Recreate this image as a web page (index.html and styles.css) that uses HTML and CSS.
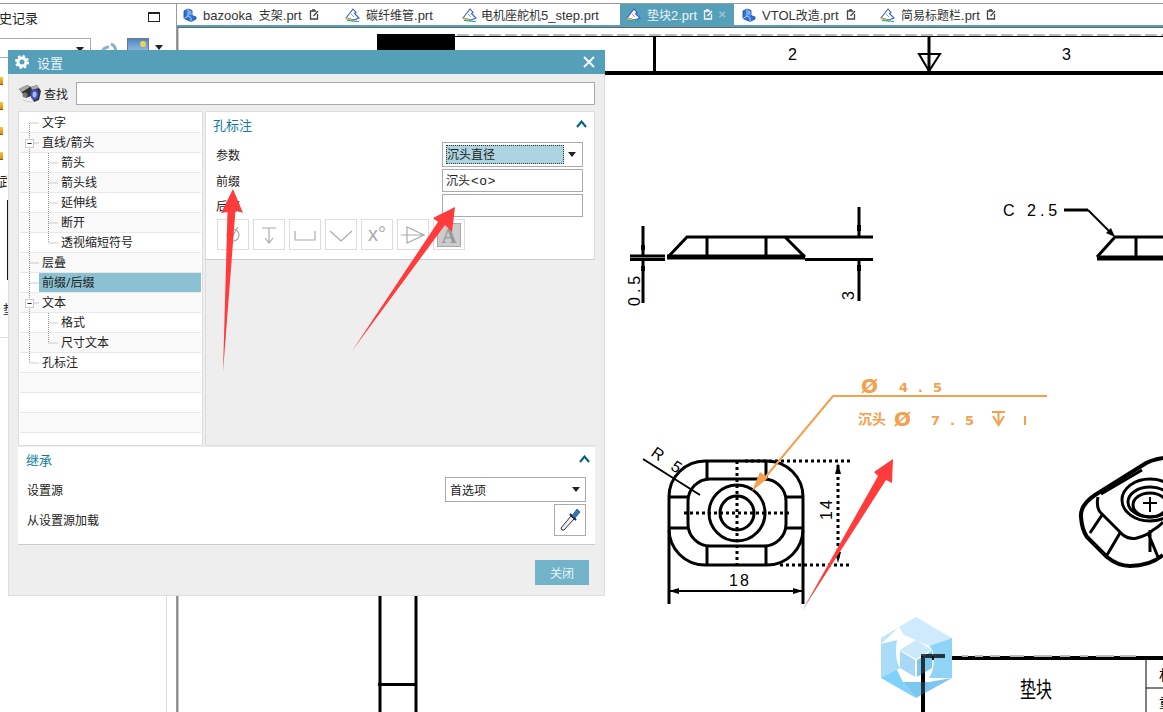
FILE: index.html
```html
<!DOCTYPE html>
<html lang="zh">
<head>
<meta charset="utf-8">
<title>设置</title>
<link rel="stylesheet" href="styles.css">
</head>
<body>
<svg class="defs" width="0" height="0" aria-hidden="true">
  <symbol id="ic-part" viewBox="0 0 14 14">
    <path d="M1 3 5 1l4 1.500v5l4 1.500v2l-5 2.500L1 10.500Z" fill="#2f72d6" stroke="#17459b" stroke-width=".8"/>
    <path d="M5 1v7l3 1.500v4M5 8l-4 2.500" fill="none" stroke="#bcd6fa" stroke-width=".9"/>
    <path d="M5.500 2.200 8.500 3v4.500l-3-1Z" fill="#7fb0f2"/>
  </symbol>
  <symbol id="ic-sheet" viewBox="0 0 16 14">
    <path d="M1 10 8 1l3 3.500-1.500 1 4.500 4.500-5 2Z" fill="#fff" stroke="#3b55d8" stroke-width="1.100"/>
    <path d="M1 10.500 9 13" stroke="#e5c52c" stroke-width="1.800" fill="none"/>
    <path d="M2 12.300 14 13.500" stroke="#27a7a0" stroke-width="1.200" fill="none"/>
    <path d="M6 6 9 9" stroke="#8b9bea" stroke-width="1" fill="none"/>
  </symbol>
  <symbol id="ic-doc" viewBox="0 0 10 11">
    <path d="M7 2H1.500v8h7V5" fill="none" stroke="currentColor" stroke-width="1.300"/>
    <path d="M3 1h3M4.500 7 9 2" fill="none" stroke="currentColor" stroke-width="1.300"/>
  </symbol>
  <symbol id="ic-chev" viewBox="0 0 11 8">
    <path d="M1 7 5.500 1.500 10 7" fill="none" stroke="#005f85" stroke-width="2"/>
  </symbol>
  <symbol id="ic-caret" viewBox="0 0 8 5">
    <path d="M0 0h8L4 5Z" fill="#222"/>
  </symbol>
</svg>

<div class="app">
  <aside class="side">
    <div class="side-head">
      <span class="side-title">史记录</span>
      <span class="win-icon"></span>
    </div>
    <div class="side-tools">
      <div class="side-combo"><svg class="caret" width="8" height="5"><use href="#ic-caret"/></svg></div>
      <svg class="tool-sync" width="18" height="12" viewBox="0 0 18 12"><path d="M2 11C3 6 6 5 9 5M16 11c0-5-2-8-5-9" fill="none" stroke="#8fb2bf" stroke-width="3"/></svg>
      <div class="tool-pic"><span class="tool-sun"></span></div>
      <svg class="caret tool-caret" width="8" height="5"><use href="#ic-caret"/></svg>
    </div>
    <div class="side-marks">
      <span class="mark"></span><span class="mark"></span><span class="mark"></span><span class="mark"></span>
    </div>
    <div class="side-frag">武</div>
    <div class="side-bar"></div>
    <div class="side-frag side-frag-b">垫</div>
    <div class="side-lower"></div>
  </aside>

  <main class="main">
    <nav class="tabs">
      <div class="tab t1"><svg class="tab-ic" width="14" height="14"><use href="#ic-part"/></svg><span class="t1-text">bazooka <span class="cn">支架</span>.prt</span><svg class="tab-doc" width="10" height="11"><use href="#ic-doc"/></svg></div>
      <div class="tab t2"><svg class="tab-ic" width="16" height="14"><use href="#ic-sheet"/></svg><span><span class="cn">碳纤维管</span>.prt</span></div>
      <div class="tab t3"><svg class="tab-ic" width="16" height="14"><use href="#ic-sheet"/></svg><span><span class="cn">电机座舵机</span>5_step.prt</span></div>
      <div class="tab t4 active"><svg class="tab-ic" width="16" height="14"><use href="#ic-sheet"/></svg><span><span class="cn">垫块</span>2.prt</span><svg class="tab-doc" width="10" height="11"><use href="#ic-doc"/></svg><span class="tab-x">✕</span></div>
      <div class="tab t5"><svg class="tab-ic" width="14" height="14"><use href="#ic-part"/></svg><span>VTOL<span class="cn">改造</span>.prt</span><svg class="tab-doc" width="10" height="11"><use href="#ic-doc"/></svg></div>
      <div class="tab t6"><svg class="tab-ic" width="16" height="14"><use href="#ic-sheet"/></svg><span><span class="cn">简易标题栏</span>.prt</span><svg class="tab-doc" width="10" height="11"><use href="#ic-doc"/></svg></div>
    </nav>
    <div class="canvas">
      <svg class="sheet" width="985" height="684" viewBox="178 28 985 684">
        <g class="frame">
          <path class="dash" d="M377 35H1163"/>
          <path class="w1" d="M378 36.500H1163"/>
          <rect x="377" y="34" width="78" height="17" fill="#000" stroke="none"/>
          <path class="w4" d="M378 73H1163"/>
          <path class="w3" d="M654.500 36V73M929 36V71"/>
          <path class="w2" d="M919 54H940L929 71Z"/>
          <path class="w3" d="M380 596V712M416 596V712M378 684.500H417"/>
          <path class="w4" d="M923 712V658H1163"/>
          <path class="w1" d="M1146 658V712M1146 688H1163"/>
        </g>
        <text class="num" x="788" y="60">2</text>
        <text class="num" x="1062" y="60">3</text>
        <text class="title-cn" transform="translate(1020 697) scale(1 1.35)">垫块</text>
        <text class="title-cn small" x="1159" y="680">材</text>
        <text class="title-cn small" x="1159" y="708">重</text>
        <path class="ghost" d="M962 656h6M975 656h8M990 656h10M1010 656h14M1034 656h18M1060 656h10M1080 656h8M1096 656h18M1120 656h16"/>

        <g>
          <path class="w5" d="M667 257H805"/>
          <path class="w3" d="M668 257 687 237H785L805 257M707 237V257M766 237V257M785 237H873M805 259.500H873"/>
          <path class="w3" d="M859 207V236M859 260V301M643 226V255M643 261V303M630 256H665M630 259.500H665"/>
          <path d="M641 245h4v5h-4ZM641 266h4v5h-4ZM857 225h4v6h-4ZM857 265h4v6h-4Z" fill="#000" stroke="none"/>
          <text class="dim big" transform="translate(854 300) rotate(-90)">3</text>
          <text class="dim big" transform="translate(640 306) rotate(-90)" letter-spacing="4">0.5</text>
        </g>

        <g>
          <text class="dim big" x="1003" y="216" letter-spacing="4">C 2.5</text>
          <path class="w3" d="M1064 210H1088"/>
          <path class="w2" d="M1088 210 1112 234"/>
          <path d="M1115 237 1106 233 1111 228Z" fill="#000" stroke="none"/>
          <path class="w5" d="M1097 258H1163"/>
          <path class="w3" d="M1097 257 1115 237H1163M1136 237V257"/>
        </g>

        <g>
          <rect class="w3" x="669" y="461" width="134" height="104" rx="36"/>
          <rect class="w3" x="688" y="479" width="98" height="67" rx="22"/>
          <path class="w3" d="M707 461V479M766 461V479M707 546V565M766 546V565M669 497H688M669 528H688M786 497H803M786 528H803"/>
          <path class="w3" d="M669 530V604M803 530V604"/>
          <circle class="w3" cx="737" cy="513" r="28"/>
          <circle class="w3" cx="737" cy="513" r="17"/>
          <path class="dash3" d="M684 513H790M737 461V565M745 461H850M780 565H850M838 465V560"/>
          <path class="w2" d="M669 591H803M643 459 700 495"/>
          <path d="M669 591 679 588V594ZM803 591 793 588V594ZM838 463 835 474H841ZM838 563 835 552H841Z" fill="#000" stroke="none"/>
          <text class="dim big" x="729" y="586" letter-spacing="2">18</text>
          <text class="dim big" transform="translate(832 520) rotate(-90)" letter-spacing="2">14</text>
          <text class="dim big" transform="translate(650 455) rotate(35)" letter-spacing="4">R 5</text>
        </g>

        <g class="iso">
          <path class="w4" d="M1163 458Q1150 460 1143 465L1095 495Q1080 505 1081 517 1082 530 1087 537L1107 557Q1118 566 1130 566 1150 566 1163 555"/>
          <path class="w3" d="M1098 497Q1096 506 1100 512L1123 535Q1130 540 1137 538 1148 535 1153 530 1160 526 1163 522M1142 470 1101 494M1102 515 1090 533M1120 533 1107 555M1148 533 1158 557M1150 530V552"/>
          <ellipse class="w3" cx="1150" cy="500" rx="28" ry="21"/>
          <ellipse class="w3" cx="1150" cy="502" rx="22" ry="15"/>
          <ellipse class="w3" cx="1150" cy="505" rx="17" ry="12"/>
          <path class="w2" d="M1150 497V512M1143 503H1157"/>
        </g>

        <g>
          <path class="o2" d="M1047 396H833L763 480"/>
          <path d="M752 491 768 478 760 472Z" fill="#f5a04c" stroke="none"/>
          <text class="otext large" x="861" y="393">Ø</text>
          <text class="otext" x="899" y="392" letter-spacing="10">4.5</text>
          <text class="otext cn" x="858" y="424">沉头</text>
          <text class="otext large" x="894" y="426">Ø</text>
          <text class="otext" x="931" y="425" letter-spacing="10">7.5</text>
          <path class="o2" d="M992 412H1005M998.500 412V425M993 416 998.500 425 1004 416"/>
          <path class="o2" d="M1025 416V425"/>
        </g>

        <g stroke="none">
          <path d="M916 617 952 638 929 646 916 640 904 635 899 627Z" fill="#cfeafc"/>
          <path d="M952 638V678L929 678C936 668 935 650 929 646Z" fill="#8fd3f6"/>
          <path d="M952 678 916 698 903 682 929 682Z" fill="#7cc7ef"/>
          <path d="M916 698 881 678 896 668 903 682Z" fill="#7fd1fa"/>
          <path d="M881 678V644L897 640C895 652 896 662 900 668Z" fill="#a9dcf9"/>
          <path d="M881 638 916 617 899 627 881 644Z" fill="#bfe6fb"/>
          <path d="M916 640 932 650 916 659 900 650Z" fill="#cbe9fb"/>
          <path d="M900 651 915 660V677L900 668Z" fill="#a7d8f7"/>
          <path d="M917 660 932 651V668L917 677Z" fill="#7dc6ee"/>
        </g>
        <path class="w4" d="M923 712V656H945" opacity=".75"/>
      </svg>
    </div>
  </main>

  <section class="dialog">
    <header class="dlg-head">
      <svg class="gear" width="14" height="14" viewBox="0 0 14 14"><circle cx="7" cy="7" r="4" fill="none" stroke="#fff" stroke-width="3"/><circle cx="7" cy="7" r="6" fill="none" stroke="#fff" stroke-width="2" stroke-dasharray="2.400 2.300"/></svg>
      <span class="dlg-title">设置</span>
      <svg class="dlg-close" width="12" height="12" viewBox="0 0 12 12"><path d="M1 1 11 11M11 1 1 11" stroke="#fff" stroke-width="1.800"/></svg>
    </header>
    <div class="dlg-body">
      <div class="search">
        <svg class="binoc" width="22" height="19" viewBox="0 0 22 19">
          <path d="M0 5 8 1l4 2 6-2 4 6-2 9-5 2-3-6-5 2-3-4Z" fill="#333"/>
          <path d="M0 5 8 1l3 2-8 5ZM12 3l6-2 2 3-7 2Z" fill="#aaa"/>
          <ellipse cx="15.500" cy="10.500" rx="4" ry="5.500" fill="#3c50bc"/>
          <ellipse cx="15.500" cy="10.500" rx="2" ry="3" fill="#a9b8ee"/>
          <ellipse cx="6" cy="11" rx="2.500" ry="2.500" fill="#777"/>
          <path d="M4 16 10 18 14 18" stroke="#ccc" fill="none"/>
        </svg>
        <span class="search-label">查找</span>
        <div class="field search-input"></div>
      </div>
      <div class="split">
        <div class="tree">
          <div class="row l1">文字</div>
          <div class="row l1">直线/箭头</div>
          <div class="row l2">箭头</div>
          <div class="row l2">箭头线</div>
          <div class="row l2">延伸线</div>
          <div class="row l2">断开</div>
          <div class="row l2">透视缩短符号</div>
          <div class="row l1">层叠</div>
          <div class="row l1 sel">前缀/后缀</div>
          <div class="row l1">文本</div>
          <div class="row l2">格式</div>
          <div class="row l2">尺寸文本</div>
          <div class="row l1">孔标注</div>
          <div class="row"></div>
          <div class="row"></div>
          <div class="row"></div>
          <svg class="tree-lines" width="60" height="270" viewBox="18 111 60 270">
            <path d="M29.500 122V362M29.500 122H39M29.500 142H39M29.500 262H39M29.500 282H39M29.500 302H39M29.500 362H39M48.500 152V242M48.500 162H58M48.500 182H58M48.500 202H58M48.500 222H58M48.500 242H58M48.500 312V342M48.500 322H58M48.500 342H58"/>
            <rect class="minus" x="25.500" y="138.500" width="8" height="8"/>
            <rect class="minus" x="25.500" y="298.500" width="8" height="8"/>
            <path class="minus-bar" d="M27.500 142.500H31.500M27.500 302.500H31.500"/>
          </svg>
        </div>
        <div class="pane">
          <div class="group">
            <div class="group-head">
              <span class="group-title">孔标注</span>
              <svg class="chev" width="11" height="8"><use href="#ic-chev"/></svg>
            </div>
            <div class="form">
              <label class="lbl">参数</label>
              <div class="field sel-box">
                <span class="sel-value">沉头直径</span>
                <svg class="caret" width="8" height="5"><use href="#ic-caret"/></svg>
              </div>
              <label class="lbl">前缀</label>
              <div class="field txt h23">沉头<span class="txt-tag">&lt;o&gt;</span></div>
              <label class="lbl">后缀</label>
              <div class="field h23"></div>
            </div>
            <div class="symbols">
              <div class="sym"><svg width="24" height="24" viewBox="0 0 24 24"><circle cx="12" cy="12" r="6"/><path d="M7 20 17 4"/></svg></div>
              <div class="sym"><svg width="24" height="24" viewBox="0 0 24 24"><path d="M5 5H19M12 5V20M8 15 12 20 16 15"/></svg></div>
              <div class="sym"><svg width="24" height="24" viewBox="0 0 24 24"><path d="M2 8V17H22V8"/></svg></div>
              <div class="sym"><svg width="24" height="24" viewBox="0 0 24 24"><path d="M1 8 12 18 23 8"/></svg></div>
              <div class="sym sym-x">x°</div>
              <div class="sym"><svg width="24" height="24" viewBox="0 0 24 24"><path d="M0 12H24M6 4 23 12 6 20Z"/></svg></div>
              <div class="sym"><span class="sym-a">A</span></div>
            </div>
          </div>
        </div>
      </div>
      <div class="inherit">
        <div class="group-head inherit-head">
          <span class="group-title">继承</span>
          <svg class="chev" width="11" height="8"><use href="#ic-chev"/></svg>
        </div>
        <div class="inherit-row first">
          <span class="lbl">设置源</span>
          <div class="field combo"><span>首选项</span><svg class="caret" width="8" height="5"><use href="#ic-caret"/></svg></div>
        </div>
        <div class="inherit-row">
          <span class="lbl">从设置源加载</span>
          <div class="field dropper">
            <svg width="22" height="24" viewBox="0 0 22 24">
              <path d="M3 22 2 20 12 8 15 11 5 22Z" fill="#e9eef2" stroke="#333" stroke-width="1"/>
              <path d="M11 6 17 12" stroke="#222" stroke-width="2"/>
              <path d="M13 8 18 1 21 4 16 10Z" fill="#2f78c0" stroke="#1c4c7d" stroke-width=".8"/>
            </svg>
          </div>
        </div>
      </div>
      <div class="actions"><button class="btn-close" type="button">关闭</button></div>
    </div>
  </section>

  <svg class="arrows" width="1163" height="712" viewBox="0 0 1163 712">
    <path d="M233 189 243 213 235.500 210 223 372 227.500 212 221 213Z"/>
    <path d="M455 207 452 232 445 225 352 351 438 222 433 218Z"/>
    <path d="M893 459 892 483 886 480 802 611 878 476 874 472Z"/>
  </svg>
</div>
</body>
</html>
```

FILE: styles.css
```css
* { box-sizing: border-box; }
html, body { margin: 0; padding: 0; background: #fff; }
body {
  font-family: "Noto Sans", "Noto Sans CJK SC", sans-serif;
  font-size: 12px;
  color: #222;
}
.defs { position: absolute; }
.app {
  position: relative;
  display: flex;
  width: 1163px;
  height: 712px;
  overflow: hidden;
  padding-top: 3px;
  background: #fff;
}
.app::before {
  content: "";
  position: absolute;
  left: 0; right: 0; top: 3px;
  height: 1px;
  background: #999;
}

/* left panel, mostly hidden behind the dialog */
.side {
  flex: 0 0 177px;
  display: flex;
  flex-direction: column;
  border-right: 1px solid #999;
  padding-top: 1px;
}
.side-head {
  display: flex;
  justify-content: space-between;
  align-items: center;
  height: 28px;
  padding: 0 16px 2px 0;
}
.side-title { font-size: 13px; margin-left: -1px; }
.win-icon {
  width: 12px; height: 10px;
  border: 1px solid #222;
  border-top-width: 2px;
}
.side-tools {
  display: flex;
  align-items: flex-start;
  height: 20px;
  margin-top: 6px;
}
.side-combo {
  display: flex;
  justify-content: flex-end;
  padding: 8px 6px 0 0;
  width: 91px; height: 20px;
  border: 1px solid #aaa;
  border-left: 0;
}
.tool-sync { margin: 4px 0 0 9px; }
.tool-pic {
  position: relative;
  width: 22px; height: 22px;
  margin-left: 9px;
  background: linear-gradient(#4d86c9, #c9dcec);
  border: 1px solid #777;
}
.tool-sun {
  position: absolute;
  right: 2px; top: 2px;
  width: 6px; height: 6px;
  border-radius: 50%;
  background: #f0d64a;
}
.tool-caret { margin: 7px 0 0 6px; }
.side-marks {
  display: flex;
  flex-direction: column;
  gap: 17px;
  margin-top: 19px;
}
.mark {
  display: block;
  width: 3px; height: 8px;
  background: linear-gradient(#f6c93a, #e08a10);
  border-bottom: 1px solid #8a5a10;
}
.side-frag { font-size: 13px; margin: 13px 0 0 -1px; line-height: 16px; width: 8px; overflow: hidden; white-space: nowrap; }
.side-bar { width: 8px; height: 80px; margin-top: 11px; border-right: 1px solid #111; }
.side-frag-b { margin: 21px 0 0 3px; }
.side-lower {
  flex: 1;
  width: 167px;
  margin-top: 20px;
  border-top: 1px solid #ddd;
  border-right: 1px solid #ddd;
}

/* document tabs */
.main { flex: 1; display: flex; flex-direction: column; min-width: 0; }
.tabs {
  display: flex;
  flex: 0 0 24px;
  border-top: 1px solid transparent;
  border-bottom: 2px solid #569fb9;
  font: 13px "Liberation Sans", "Noto Sans CJK SC", sans-serif;
  color: #333;
}
.tabs .cn { font: 12px "Noto Sans CJK SC", sans-serif; }
.tab {
  display: flex;
  align-items: center;
  gap: 5px;
  height: 21px;
  padding-left: 6px;
  white-space: nowrap;
  flex: none;
}
.tab-doc { color: #444; margin-left: 1px; }
.t1 { width: 162px; gap: 6px; }
.t1-text { word-spacing: 3px; }
.t2 { width: 117px; }
.t3 { width: 164px; gap: 3px; }
.t4 { width: 114px; background: #569fb9; color: #eaf4f7; }
.t4 .tab-doc { color: #fff; }
.t5 { width: 140px; padding-left: 8px; gap: 6px; }
.t6 { width: 170px; }
.tab-x { font-size: 10px; color: #9fc4d2; font-weight: 700; }

/* drawing sheet */
.canvas {
  flex: 1;
  border-top: 1px solid #666;
  border-left: 1px solid #888;
  box-shadow: inset 1px 0 0 #ccc;
  overflow: hidden;
}
.sheet { display: block; fill: none; stroke: #000; }
.sheet text { stroke: none; }
.sheet .w1 { stroke-width: 1; }
.sheet .w2 { stroke-width: 2; }
.sheet .w3 { stroke-width: 3; }
.sheet .w4 { stroke-width: 4; }
.sheet .w5 { stroke-width: 5; }
.sheet .dash { stroke: #777; stroke-width: 1; stroke-dasharray: 12 4; }
.sheet .dash3 { stroke-width: 3; stroke-dasharray: 3 3; }
.sheet .ghost { stroke: #bbb; stroke-width: 2; }
.sheet .o2 { stroke: #f5a04c; stroke-width: 2; }
.iso path, .iso ellipse { stroke-linejoin: round; }
.num { font: 16px "Liberation Sans", sans-serif; fill: #000; }
.dim { font: 14px "Liberation Sans", sans-serif; fill: #000; }
.dim.big { font-size: 16px; }
.otext { font: 700 13px "DejaVu Sans", sans-serif; fill: #f5a04c; }
.otext.large { font-size: 20px; }
.otext.cn { font: 700 14px "Noto Sans CJK SC", sans-serif; }
.title-cn { font: 16px "Noto Sans CJK SC", sans-serif; fill: #000; }
.title-cn.small { font-size: 14px; }

/* settings dialog */
.dialog {
  position: absolute;
  left: 8px; top: 50px;
  width: 597px; height: 546px;
  display: flex;
  flex-direction: column;
  background: #eee;
  border: 1px solid #ddd;
  border-top: 0;
}
.dlg-head {
  display: flex;
  align-items: center;
  height: 24px;
  margin: 0 -1px;
  padding: 0 10px 0 7px;
  background: #569fb9;
  color: #fff;
  flex: none;
}
.dlg-title { margin-left: 8px; font-size: 13px; color: #eef6f9; }
.dlg-close { margin-left: auto; }
.dlg-body { display: flex; flex-direction: column; flex: 1; padding: 0 9px; }
.search { display: flex; align-items: center; height: 23px; margin-top: 8px; }
.binoc { margin-left: 1px; }
.search-label { margin-left: 3px; font-size: 12px; }
.field { background: #fff; border: 1px solid #aaa; }
.search-input { margin-left: 8px; flex: 1; height: 23px; }
.split { display: flex; gap: 2px; margin-top: 6px; height: 335px; }
.tree {
  position: relative;
  flex: 0 0 185px;
  background: #fff;
  border: 1px solid #ddd;
  padding: 1px 1px 0;
}
.row {
  height: 20px;
  line-height: 19px;
  font-size: 12px;
  border-bottom: 1px solid #e8e8e8;
  white-space: nowrap;
  color: #222;
}
.row:nth-child(even) { background: #f9f9f9; }
.l1 { padding-left: 22px; }
.l2 { padding-left: 41px; }
.row.sel {
  background: linear-gradient(90deg, transparent 19px, #8cc1d3 19px);
  padding-left: 22px;
}
.tree-lines { position: absolute; left: -1px; top: 0; }
.tree-lines path { fill: none; stroke: #999; stroke-width: 1; stroke-dasharray: 1 1; }
.tree-lines .minus { fill: #fff; stroke: #ccc; stroke-width: 1; }
.tree-lines .minus-bar { stroke: #222; stroke-dasharray: none; }
.pane { flex: 1; display: flex; flex-direction: column; background: #eee; border-left: 1px solid #ddd; border-bottom: 1px solid #ddd; }
.group {
  height: 149px;
  background: #fff;
  border-bottom: 1px solid #ccc;
  border-top: 1px solid #ddd;
  border-right: 1px solid #ddd;
}
.group-head {
  display: flex;
  justify-content: space-between;
  align-items: center;
  height: 24px;
  padding: 0 7px 0 7px;
}
.group-title { font-size: 13px; color: #0f7c9f; }
.form {
  display: grid;
  grid-template-columns: 1fr 141px;
  row-gap: 2px;
  align-items: center;
  margin-top: 6px;
  padding: 0 11px 0 10px;
}
.lbl { font-size: 12px; color: #222; }
.sel-box {
  display: flex;
  align-items: center;
  justify-content: space-between;
  height: 25px;
  padding: 2px 6px 2px 3px;
}
.sel-value {
  width: 118px;
  height: 19px;
  line-height: 17px;
  padding-left: 0;
  background: #add5e1;
  border: 1px dotted #333;
}
.h23 { height: 23px; }
.txt { padding-left: 3px; line-height: 21px; }
.txt-tag { font: 13px "Liberation Sans", sans-serif; letter-spacing: 1px; margin-left: 1px; }
.symbols { display: flex; gap: 4px; margin-top: 2px; padding-left: 11px; }
.sym {
  display: flex;
  align-items: center;
  justify-content: center;
  width: 32px; height: 31px;
  border: 1px solid #ddd;
  color: #aaa;
}
.sym svg { fill: none; stroke: #aaa; stroke-width: 1.200; }
.sym-x { font: 20px "Liberation Sans", sans-serif; }
.sym-a {
  width: 24px; height: 24px;
  text-align: center;
  font: 700 21px/24px "Liberation Serif", serif;
  color: #999;
  background: #ccc;
  border: 1px solid #aaa;
}
.inherit {
  flex: 0 0 98px;
  margin-top: 1px;
  background: #fff;
  border-bottom: 1px solid #ccc;
}
.inherit-head { padding-left: 8px; padding-right: 5px; }
.inherit-row {
  display: flex;
  justify-content: space-between;
  align-items: center;
  padding: 0 9px;
  margin-top: 2px;
}
.inherit-row.first { margin-top: 6px; }
.combo {
  display: flex;
  justify-content: space-between;
  align-items: center;
  width: 141px; height: 25px;
  padding: 0 5px 0 4px;
  font-size: 12px;
}
.dropper {
  display: flex;
  align-items: center;
  justify-content: center;
  width: 32px; height: 32px;
}
.actions { display: flex; justify-content: flex-end; padding: 15px 6px 0 0; }
.btn-close {
  width: 54px; height: 25px;
  padding: 0;
  border: 0;
  background: #72b3c9;
  color: #e8f3f7;
  font: 12px "Noto Sans CJK SC", sans-serif;
}
.arrows { position: absolute; left: 0; top: 0; pointer-events: none; }
.arrows path { fill: #ff3b3b; }
```
